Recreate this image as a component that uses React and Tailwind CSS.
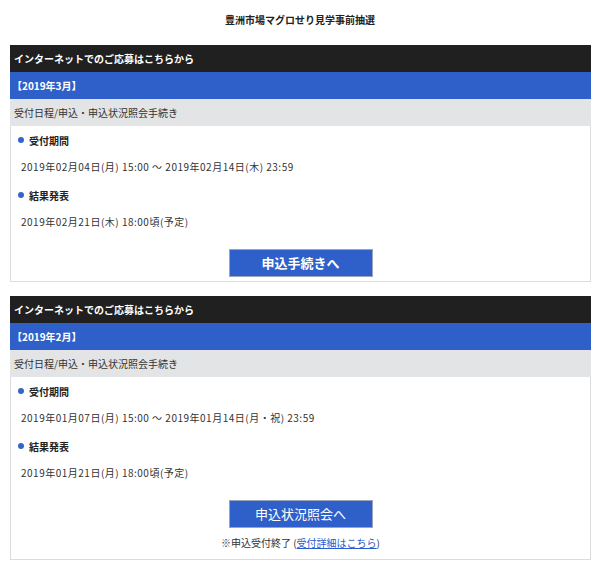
const font = { fontFamily: '"Noto Sans CJK JP", "Noto Sans", sans-serif' };

function Label({ children }) {
  return (
    <div className="flex items-center h-[20px] pl-[7px]">
      <span className="w-[6px] h-[6px] rounded-full bg-[#3464cf] mr-[5px]" />
      <span className="text-[10px] font-bold text-[#222]">{children}</span>
    </div>
  );
}

function Line({ children, className = '' }) {
  return (
    <div className={`h-[20px] flex items-center pl-[10px] text-[10px] tracking-[0.5px] text-[#333] ${className}`}>
      {children}
    </div>
  );
}

function Card({ month, period, result, button, bold, note }) {
  return (
    <div className="mx-[10px] w-[581px]">
      <div className="h-[27px] bg-[#202020] text-white text-[10px] font-bold flex items-center pl-[4px]">
        インターネットでのご応募はこちらから
      </div>
      <div className="h-[27px] bg-[#2f5fc9] text-white text-[10px] font-bold flex items-center pl-[2px]">
        【{month}】
      </div>
      <div className="h-[27px] bg-[#e3e4e6] text-[#333] text-[10px] flex items-center pl-[4px]">
        受付日程/申込・申込状況照会手続き
      </div>
      <div className={`border border-t-0 border-[#dcdcdc] pt-[4px] ${note ? 'pb-[3px]' : 'pb-[4px]'}`}>
        <Label>受付期間</Label>
        <Line className="mt-[6px]">{period}</Line>
        <div className="mt-[9px]">
          <Label>結果発表</Label>
        </div>
        <Line className="mt-[6px]">{result}</Line>
        <div className="flex justify-center mt-[18px]">
          <button
            className={`w-[144px] h-[28px] bg-[#2f5fc9] border border-[#9aa5bb] text-white text-[13px] ${bold ? 'font-bold' : 'font-normal'}`}
            style={font}
          >
            {button}
          </button>
        </div>
        {note && (
          <div className="text-center text-[10px] text-[#333] mt-[7px] mb-[5px] h-[16px] leading-[16px]">
            ※申込受付終了 (<span className="text-[#2a5ad0] underline">受付詳細はこちら</span>)
          </div>
        )}
      </div>
    </div>
  );
}

export default function App() {
  return (
    <div className="w-[600px] h-[569px] bg-white overflow-hidden" style={font}>
      <div className="pt-[12px] h-[45px] text-center text-[10px] font-bold text-[#222] leading-[16px]">
        豊洲市場マグロせり見学事前抽選
      </div>
      <Card
        month="2019年3月"
        period="2019年02月04日(月) 15:00 ～ 2019年02月14日(木) 23:59"
        result="2019年02月21日(木) 18:00頃(予定)"
        button="申込手続きへ"
        bold
      />
      <div className="h-[14px]" />
      <Card
        month="2019年2月"
        period="2019年01月07日(月) 15:00 ～ 2019年01月14日(月・祝) 23:59"
        result="2019年01月21日(月) 18:00頃(予定)"
        button="申込状況照会へ"
        note
      />
    </div>
  );
}
